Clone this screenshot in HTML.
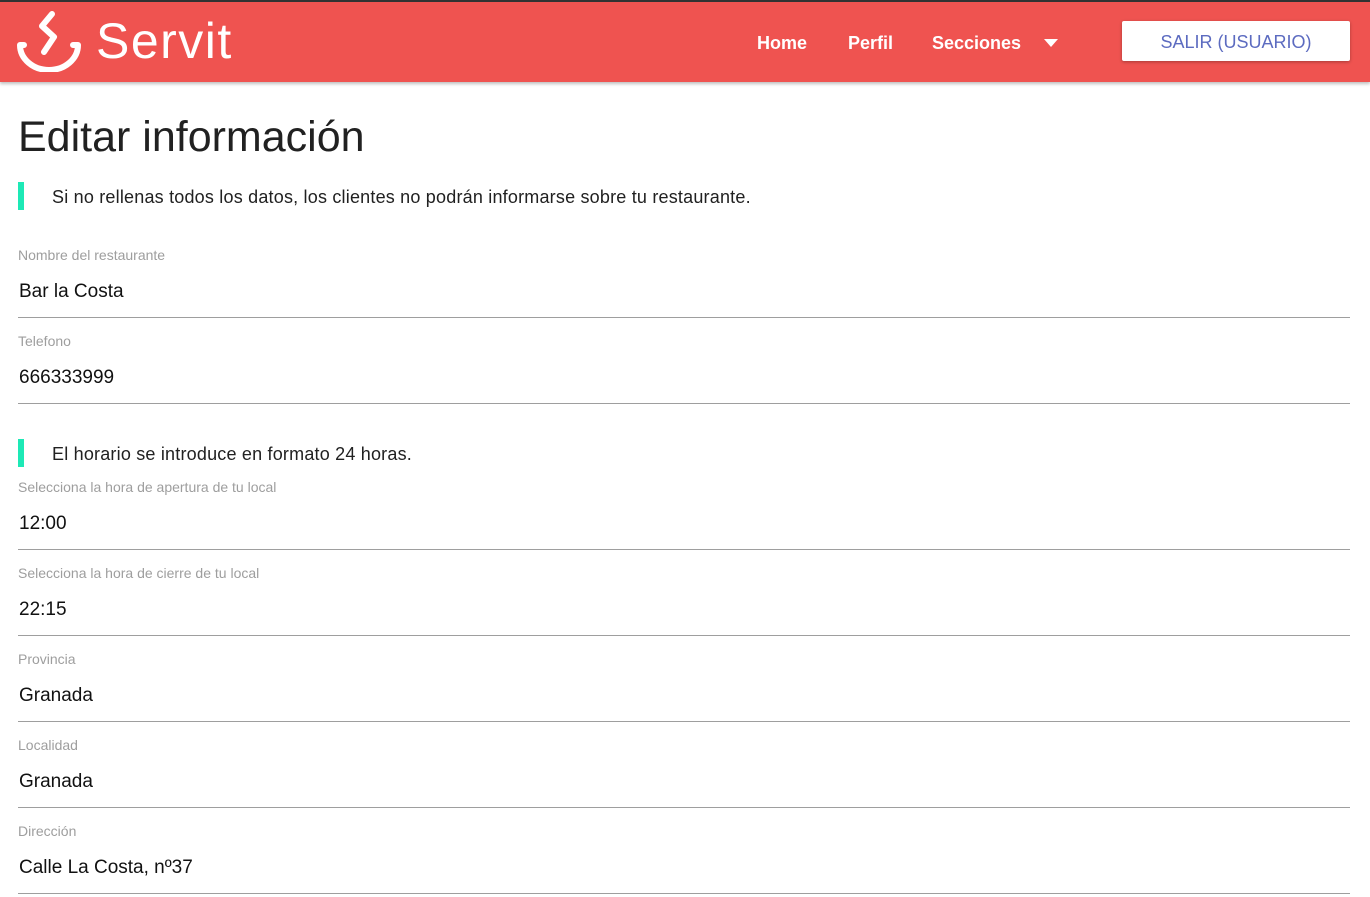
<!DOCTYPE html>
<html><head><meta charset="utf-8"><style>
*{margin:0;padding:0;box-sizing:border-box}
body{width:1370px;height:897px;overflow:hidden;background:#fff;font-family:"Liberation Sans",sans-serif;color:#212121}
.top{position:absolute;left:0;top:0;width:1370px;height:2px;background:#333}
.nav{position:absolute;left:0;top:2px;width:1370px;height:80px;background:#ef5350;box-shadow:0 2px 3px rgba(0,0,0,.25)}
.logo{position:absolute;left:96px;top:10px;font-size:50px;color:#fff;letter-spacing:1.5px}
.nl{position:absolute;top:31px;color:#fff;font-weight:bold;font-size:18px}
.btn{position:absolute;left:1122px;top:19px;width:228px;height:40px;background:#fff;border-radius:2px;box-shadow:0 1px 3px rgba(0,0,0,.3);color:#5c6bc0;font-size:18px;text-align:center;line-height:42px}
h1{position:absolute;left:18px;top:113px;font-size:43px;font-weight:normal;color:#212121}
.note{position:absolute;left:18px;height:28px;border-left:6px solid #1de9b6;padding-left:28px;font-size:18px;line-height:30px;color:#212121;letter-spacing:.2px}
.f{position:absolute;left:18px;width:1332px;height:72px;border-bottom:1px solid #9e9e9e}
.f .l{position:absolute;left:0;top:1px;font-size:14px;color:#9e9e9e}
.f .v{position:absolute;left:1px;top:35px;font-size:19px;color:#111}
</style></head><body>
<div class="top"></div>
<div class="nav">
<svg style="position:absolute;left:16px;top:8px" width="66" height="62" viewBox="0 0 66 62" fill="none" stroke="#fff" stroke-width="6" stroke-linecap="round" stroke-linejoin="round">
<path d="M8 35 H4 A29 25 0 0 0 62 35 H57"/>
<polyline points="36,4 26,16 38,27 28,42"/>
</svg>
<div class="logo">Servit</div>
<div class="nl" style="left:757px">Home</div>
<div class="nl" style="left:848px">Perfil</div>
<div class="nl" style="left:932px">Secciones</div>
<svg style="position:absolute;left:1044px;top:37px" width="14" height="8"><path d="M0 0H14L7 8Z" fill="#fff"/></svg>
<div class="btn">SALIR (USUARIO)</div>
</div>
<h1>Editar información</h1>
<div class="note" style="top:182px">Si no rellenas todos los datos, los clientes no podrán informarse sobre tu restaurante.</div>
<div class="f" style="top:246px"><div class="l">Nombre del restaurante</div><div class="v">Bar la Costa</div></div>
<div class="f" style="top:332px"><div class="l">Telefono</div><div class="v">666333999</div></div>
<div class="note" style="top:439px">El horario se introduce en formato 24 horas.</div>
<div class="f" style="top:478px"><div class="l">Selecciona la hora de apertura de tu local</div><div class="v">12:00</div></div>
<div class="f" style="top:564px"><div class="l">Selecciona la hora de cierre de tu local</div><div class="v">22:15</div></div>
<div class="f" style="top:650px"><div class="l">Provincia</div><div class="v">Granada</div></div>
<div class="f" style="top:736px"><div class="l">Localidad</div><div class="v">Granada</div></div>
<div class="f" style="top:822px"><div class="l">Dirección</div><div class="v">Calle La Costa, nº37</div></div>
</body></html>
